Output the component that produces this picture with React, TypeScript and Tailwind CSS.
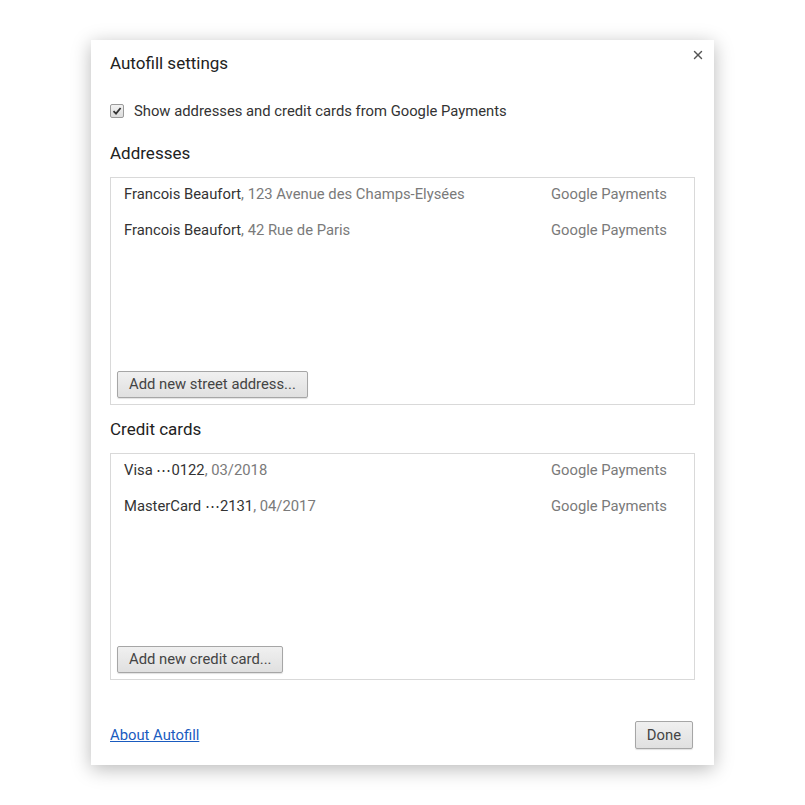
import { X } from 'lucide-react'

type Entry = { main: string; sub: string }

const ADDRESSES: Entry[] = [
    { main: 'Francois Beaufort', sub: ', 123 Avenue des Champs-Elysées' },
    { main: 'Francois Beaufort', sub: ', 42 Rue de Paris' },
]

const CARDS: Entry[] = [
    { main: 'Visa \u22EF0122', sub: ', 03/2018' },
    { main: 'MasterCard \u22EF2131', sub: ', 04/2017' },
]

function GrayButton({ label, className = '' }: { label: string; className?: string }) {
    return (
        <button
            className={
                'h-[27px] rounded-[2px] border border-[#a6a6a6] bg-gradient-to-b from-[#f0f0f0] to-[#e0e0e0] px-[11px] text-[14.8px] text-[#444] shadow-[0_1px_1px_rgba(0,0,0,0.12)] ' +
                className
            }
        >
            {label}
        </button>
    )
}

function EntryList({ entries, addLabel, h }: { entries: Entry[]; addLabel: string; h: string }) {
    return (
        <div className={'flex flex-col justify-between border border-[#d9d9d9] ' + h}>
            <div className="flex flex-col">
                {entries.map(e => (
                    <div key={e.main + e.sub} className="flex h-9 items-center justify-between pb-[3px] pl-[13px] pr-[27px] text-[14.8px]">
                        <span>
                            <span className="text-[#333]">{e.main}</span>
                            <span className="text-[#7a7a7a]">{e.sub}</span>
                        </span>
                        <span className="text-[#7a7a7a]">Google Payments</span>
                    </div>
                ))}
            </div>
            <div className="p-[6px]">
                <GrayButton label={addLabel} />
            </div>
        </div>
    )
}

export default function App() {
    return (
        <div className="flex min-h-[805px] justify-center bg-white pt-10 font-['Roboto',_'Liberation_Sans',_sans-serif]">
            <div className="relative h-[725px] w-[623px] bg-white px-[19px] pt-[11px] shadow-[0_4px_18px_rgba(0,0,0,0.28)]">
                {/* close */}
                <button className="absolute right-[9px] top-[8px] flex size-[14px] items-center justify-center text-[#555]">
                    <X size={14} strokeWidth={2.4} />
                </button>

                <h1 className="text-[17px] leading-6 text-[#222]">Autofill settings</h1>

                <label className="mt-[26px] flex h-5 items-center gap-[10px] text-[14.8px] text-[#333]">
                    <span className="flex size-[14px] items-center justify-center rounded-[2px] border border-[#9a9a9a] bg-gradient-to-b from-[#f2f2f2] to-[#dcdcdc]">
                        <svg width="10" height="10" viewBox="0 0 10 10">
                            <path d="M1.5 5.2 L4 7.6 L8.6 2" fill="none" stroke="#333" strokeWidth="1.8" />
                        </svg>
                    </span>
                    Show addresses and credit cards from Google Payments
                </label>

                <h2 className="mt-5 text-[17px] leading-6 text-[#222]">Addresses</h2>
                <div className="mt-3">
                    <EntryList entries={ADDRESSES} addLabel="Add new street address..." h="h-[228px]" />
                </div>

                <h2 className="mt-3 text-[17px] leading-6 text-[#222]">Credit cards</h2>
                <div className="mt-3">
                    <EntryList entries={CARDS} addLabel="Add new credit card..." h="h-[227px]" />
                </div>

                <div className="mt-[41px] flex items-center justify-between">
                    <a href="#" className="text-[14.8px] text-[#1a5bbf] underline">
                        About Autofill
                    </a>
                    <GrayButton label="Done" className="mr-[2px] h-[28px]" />
                </div>
            </div>
        </div>
    )
}
